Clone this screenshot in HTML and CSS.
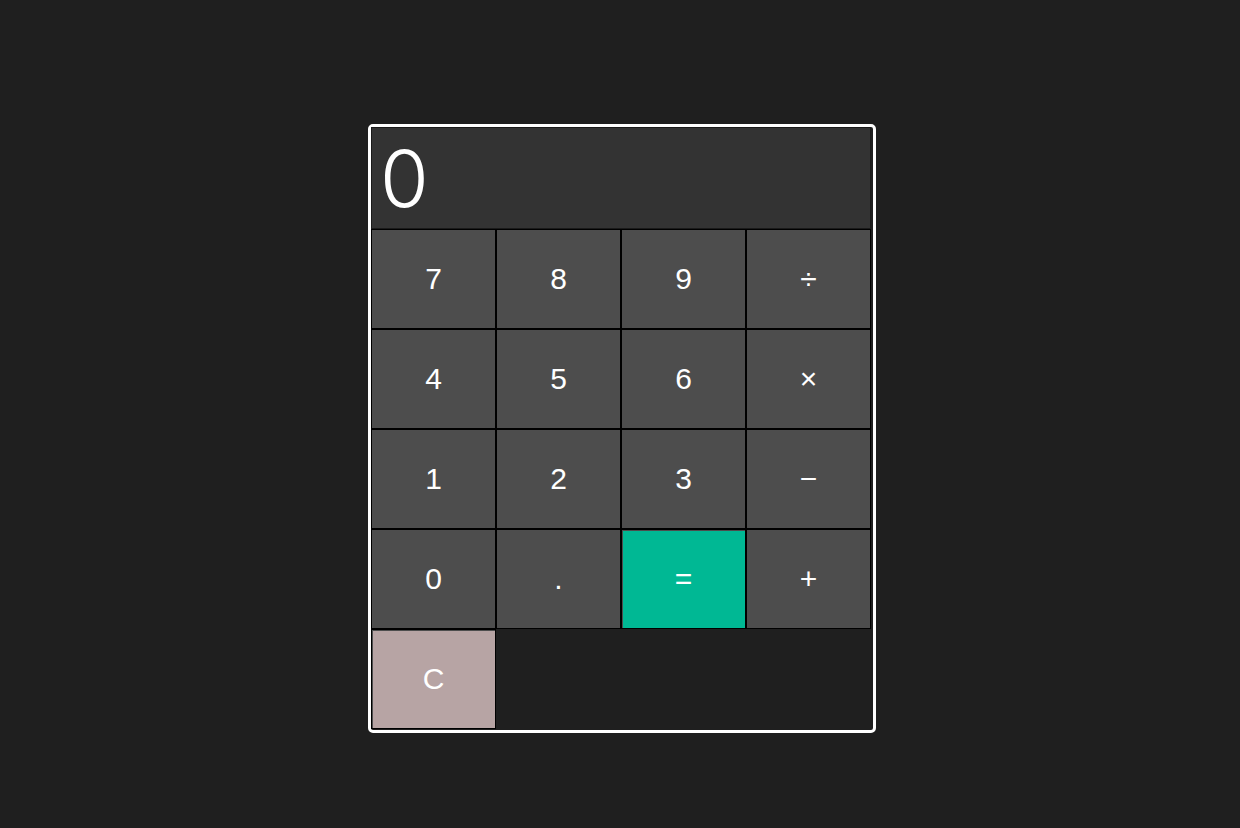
FILE: index.html
```html
<!DOCTYPE html>
<html lang="en">
<head>
  <meta charset="UTF-8">
  <meta name="viewport" content="width=device-width, initial-scale=1.0">
  <title>Calculator</title>
  <link rel="stylesheet" href="styles.css">
</head>
<body>

  <div class="calculator">
    <!-- Display -->
    <div class="display" id="display">0</div>

    <!-- Keypad -->
    <div class="keys">
      <button class="key">7</button>
      <button class="key">8</button>
      <button class="key">9</button>
      <button class="key op">&divide;</button>

      <button class="key">4</button>
      <button class="key">5</button>
      <button class="key">6</button>
      <button class="key op">&times;</button>

      <button class="key">1</button>
      <button class="key">2</button>
      <button class="key">3</button>
      <button class="key op">&minus;</button>

      <button class="key">0</button>
      <button class="key">.</button>
      <button class="key equals">=</button>
      <button class="key op">+</button>

      <button class="key clear">C</button>
    </div>
  </div>

</body>
</html>
```

FILE: styles.css
```css
/* Calculator Styles */
body {
  font-family: "Liberation Sans", Arial, sans-serif;
  margin: 0;
  padding: 0 0 0 4px;
  background-color: #1f1f1f;
}

.calculator {
  width: 500px;
  margin: 124px auto 0;
  padding: 0 2px 1px 0;
  border: 3px solid #fff;
  border-radius: 5px;
  background-color: #1f1f1f;
}

.display {
  height: 100px;
  padding: 0 8px;
  display: flex;
  align-items: center;
  border: 1px solid #1a1a1a;
  background-color: #333;
  color: #fff;
  font-family: Inter, sans-serif;
  font-weight: 350;
  font-size: 79px;
}

.keys {
  display: grid;
  grid-template-columns: repeat(4, 125px);
  grid-auto-rows: 100px;
}

.key {
  box-sizing: border-box;
  margin: 0;
  padding: 0;
  border: 1px solid #000;
  background-color: #4d4d4d;
  color: #fff;
  font-family: "Liberation Sans", Arial, sans-serif;
  font-size: 30px;
  cursor: pointer;
}

.key:hover {
  background-color: #575757;
}

.op {
  font-weight: 500;
}

.equals {
  background-color: #00b894;
  box-shadow: inset 1px 1px 0 #4d4d4d;
}

.equals:hover {
  background-color: #00a383;
}

.clear {
  background-color: #b7a4a4;
  box-shadow: inset 1px 1px 0 #4d4d4d;
}

.clear:hover {
  background-color: #a89595;
}
```
